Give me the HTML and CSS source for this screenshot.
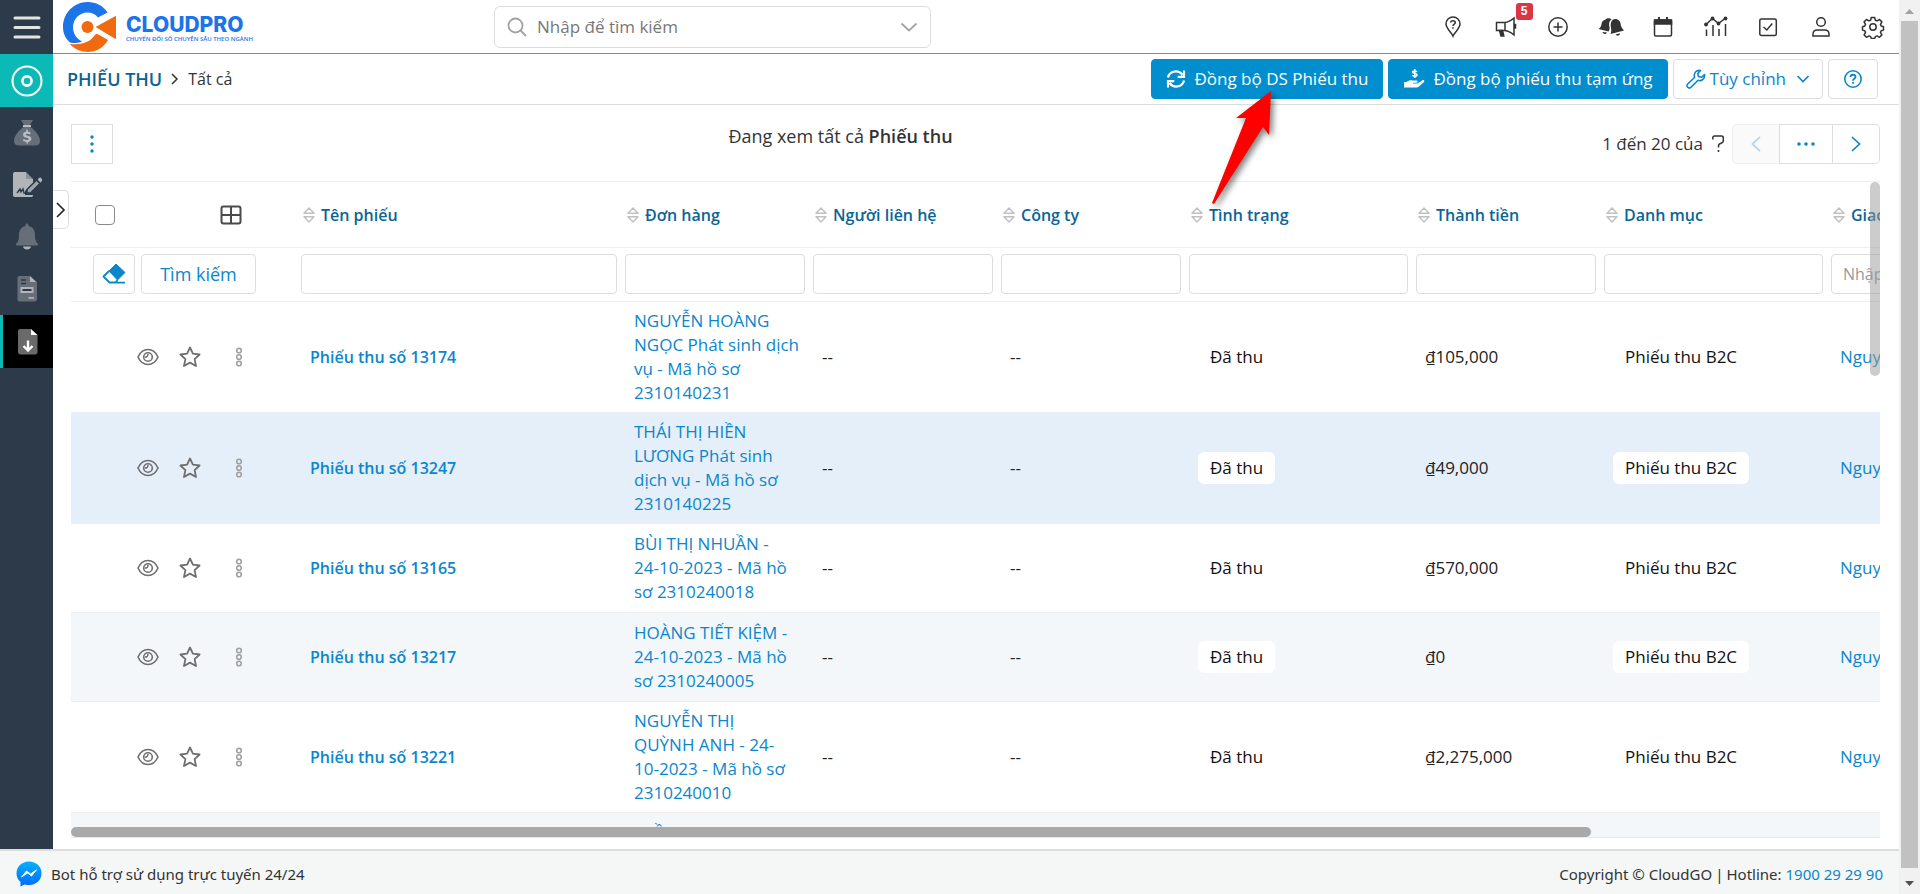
FILE: index.html
```html
<!DOCTYPE html>
<html lang="vi">
<head>
<meta charset="utf-8">
<title>Phiếu thu - CloudPro</title>
<link rel="stylesheet" href="styles.css">
</head>
<body>
<svg class="defs" aria-hidden="true">
  <symbol id="sort" viewBox="0 0 12 16"><path d="M6 1 11 6.200H1ZM6 15 11 9.800H1Z" fill="none" stroke="#c0c0c0" stroke-width="1.400" stroke-linejoin="round"/></symbol>
  <symbol id="eye" viewBox="0 0 22 18"><g fill="none" stroke="#6f6f6f" stroke-width="1.600"><path d="M1 9C3 4.500 6.500 1.500 11 1.500S19 4.500 21 9c-2 4.500-5.500 7.500-10 7.500S3 13.500 1 9Z"/><circle cx="11" cy="9" r="4.300"/></g><path d="M8 9a3 3 0 0 0 3-3v1.500L9.800 9.300Z" fill="#6f6f6f" stroke="#6f6f6f"/></symbol>
  <symbol id="star" viewBox="0 0 22 22"><path d="m11 1.500 2.900 6.200 6.700.8-5 4.600 1.400 6.900L11 16.600 5 20l1.400-6.900-5-4.600 6.700-.8Z" fill="none" stroke="#6f6f6f" stroke-width="1.800" stroke-linejoin="round"/></symbol>
  <symbol id="dots" viewBox="0 0 8 20"><g fill="none" stroke="#a0a0a0" stroke-width="1.600"><circle cx="4" cy="3.500" r="2.300"/><circle cx="4" cy="10" r="2.300"/><circle cx="4" cy="16.500" r="2.300"/></g></symbol>
</svg>
<div class="window">
  <div class="app">
    <div class="workspace">
      <nav class="sidebar" aria-label="Menu chính">
        <button class="side-item side-burger" aria-label="Mở menu"><svg width="30" height="26" viewBox="0 0 30 26"><path d="M3 4h24M3 13.500h24M3 23h24" stroke="#e3e5e4" stroke-width="3" stroke-linecap="round"/></svg></button>
        <a href="#" class="side-item side-home" aria-label="Trang chủ"><svg width="32" height="32" viewBox="0 0 32 32" fill="none" stroke="#fff"><circle cx="16" cy="16" r="14.500" stroke-width="2"/><circle cx="16" cy="16" r="4.600" stroke-width="2.600"/></svg></a>
        <a href="#" class="side-item" aria-label="Tài chính"><svg width="28" height="28" viewBox="0 0 28 28"><path d="M8 1h12l-3 5H11ZM10.500 8h7C22 11 27 17 27 22c0 3-2 4.500-5 4.500H6c-3 0-5-1.500-5-4.500C1 17 6 11 10.500 8Z" fill="#666f79"/><path d="M10 6h8v2h-8zM13.200 10.500h1.600v2c1.300.2 2.300.6 3 1.100l-.8 1.800c-1.800-1-4.300-1-4.300.2 0 1.700 5.700.7 5.700 4.200 0 1.700-1.300 2.800-3.300 3.100v1.600h-1.600v-1.600c-1.500-.1-2.800-.6-3.700-1.300l.9-1.700c1.900 1.300 5 1.400 5 0 0-1.700-5.600-.7-5.600-4.200 0-1.600 1.200-2.700 3.100-3.100Z" fill="#b8bdc3"/></svg></a>
        <a href="#" class="side-item" aria-label="Hợp đồng"><svg width="32" height="28" viewBox="0 0 32 28"><path d="M4 1h11v7h7v4l-8 8v4h8v.5c0 1-1 1.500-2 1.500H4c-1.500 0-2-1-2-2V3c0-1 .5-2 2-2Z" fill="#b1b5ba"/><path d="m15 1 7 7h-7Z" fill="#8b929a"/><path d="m6 22 3-4 1 3 2-3 1 4h3" fill="none" stroke="#2c3a49" stroke-width="1.400"/><path d="m16 18.500 9.500-9.500 3.500 3.500-9.500 9.500H16Z" fill="#9ea4aa" stroke="#2c3a49" stroke-width="1.500"/><path d="m26.500 8.500 2-1.800c1-.7 3.500 1.800 2.500 3l-1.500 2Z" fill="#b1b5ba"/></svg></a>
        <a href="#" class="side-item" aria-label="Thông báo"><svg width="24" height="28" viewBox="0 0 24 28"><path d="M10.500 3V2c0-2 3-2 3 0v1c5 1 6.500 5 6.500 9 0 5 1 7 3 9 .5.700 0 1.500-1 1.500H2c-1 0-1.500-.8-1-1.500 2-2 3-4 3-9 0-4 1.500-8 6.500-9Z" fill="#666f79"/><path d="M8 23.500h8c-.5 4-7.500 4-8 0Z" fill="#b1b5ba"/></svg></a>
        <a href="#" class="side-item" aria-label="Hóa đơn"><svg width="22" height="28" viewBox="0 0 22 28"><path d="M3 1h11v6h7v17c0 1.500-1 2.500-2.500 2.500h-15C2 26.500 1.500 25 1.500 24V3c0-1 .5-2 1.500-2Z" fill="#666f79"/><path d="M14 1v6h6.500ZM12.500 22H18v1.800h-5.500z" fill="#b1b5ba"/><path d="M5 5h5M5 8.500h5" stroke="#2c3a49" stroke-width="1.500"/><path d="M5.500 13h11v4h-11z" fill="#2c3a49" stroke="#b1b5ba" stroke-width="2"/></svg></a>
        <a href="#" class="side-item side-current" aria-label="Phiếu thu" aria-current="page"><svg width="22" height="28" viewBox="0 0 22 28"><path d="M3 1h11v6h6.500v17c0 1.500-1 2.500-2.500 2.500H3.500C2 26.500 1 25.500 1 24V3c0-1 1-2 2-2Z" fill="#6a6a6a"/><path d="M14 1v6h6.500Z" fill="#fff"/><path d="M11 12.500V22M6.500 18l4.500 4.500 4.500-4.500" fill="none" stroke="#fff" stroke-width="2.400"/></svg></a>
      </nav>
      <div class="main">
        <header class="topbar">
          <a href="#" class="logo" aria-label="CloudPro">
            <svg width="54" height="52" viewBox="0 0 54 52"><path d="M44.500 11.500C40 4.500 33 1 24.500 1C11 1 0 12 0 26c0 7 3 12 7 15.500c5 1 9 .5 12-1C13 37.500 10 32 10 26.500C10 18 16.500 11.500 24.500 11.500c4 0 8 1.500 10.500 5Z" fill="#1b74e8"/><path d="M6.500 43c12 1 20-1.500 25-8.500c1-1.500 2-2 4-1l9.500 5.500C40.500 47 33 51 25 51c-7 0-13.500-3-18.500-8Z" fill="#f26a0f"/><circle cx="24.500" cy="26" r="6" fill="#f26a0f"/><path d="M33.500 26 52.500 15.500v22Z" fill="#f26a0f" stroke="#f26a0f" stroke-linejoin="round"/></svg>
            <span class="logo-text"><span class="logo-name">CLOUDPRO</span><span class="logo-tag">CHUYỂN ĐỔI SỐ CHUYÊN SÂU THEO NGÀNH</span></span>
          </a>
          <div class="search">
            <svg width="20" height="20" viewBox="0 0 20 20" fill="none" stroke="#a3a3a3" stroke-width="1.800"><circle cx="8.500" cy="8.500" r="7"/><path d="m13.500 13.500 5.500 5.500"/></svg>
            <input type="text" aria-label="Tìm kiếm" placeholder="Nhập để tìm kiếm">
            <svg width="18" height="18" viewBox="0 0 18 18" fill="none" stroke="#a3a3a3" stroke-width="1.800"><path d="m1.500 5.500 7.500 7 7.500-7"/></svg>
          </div>
          <div class="top-icons">
            <button aria-label="Hướng dẫn"><svg width="24" height="24" viewBox="0 0 24 24" fill="none" stroke="#333" stroke-width="1.500"><path d="M12 21c-1-3-7-7.500-7-12a7 7 0 0 1 14 0c0 4.500-6 9-7 12Z"/><path d="M9.700 7.500C9.700 5 14.300 5 14.300 7.500c0 1.700-2.300 1.600-2.300 3.500M12 12.300v1.500"/></svg></button>
            <button aria-label="Tin mới, 5"><svg width="24" height="24" viewBox="0 0 24 24" fill="none" stroke="#333" stroke-width="1.500"><path d="M2.500 7.500H11c3-.3 6-2 9-4.500v17c-3-2.500-6-4.200-9-4.500H2.500ZM11 7.500v8M20 9.500h1.500v3.500H20"/><path d="M5.500 15.500h3l1.300 5.500H7Z" fill="#333"/></svg><span class="badge">5</span></button>
            <button aria-label="Thêm"><svg width="24" height="24" viewBox="0 0 24 24" fill="none" stroke="#333" stroke-width="1.500"><circle cx="12" cy="12" r="9.200"/><path d="M12 7.500v9M7.500 12h9"/></svg></button>
            <button aria-label="Thông báo"><svg width="26" height="24" viewBox="0 0 26 24" fill="#333"><path d="M7.500 4.500c1.500-1.800 4.500-1.500 6-.3-3 2.500-2.500 5.500-2 8 .3 1.500 0 2.800-1 4.300L.5 14c2-1.500 2.800-2.800 3-5 .2-2 1.500-4 4-4.500Z"/><path d="M14.500 5c2.500-2.500 7.500-.5 8 3 .3 3 .8 4.500 3.500 7.500l-13.500 3.500c1.300-3 .7-4.500.3-7-.4-3 .2-5.500 1.700-7ZM4.500 17l4.500.5c-1.500 2.500-4 1.500-4.500-.5ZM17.500 19.500l4.500-1.200c0 2.400-3 3.200-4.500 1.200Z"/></svg></button>
            <button aria-label="Lịch"><svg width="24" height="24" viewBox="0 0 24 24" fill="none" stroke="#333" stroke-width="1.500"><rect x="3.500" y="5" width="17" height="16" rx="1.500"/><path d="M3.500 5h17v4h-17z" fill="#333"/><path d="M8 2v4M16 2v4" stroke-width="2"/></svg></button>
            <button aria-label="Báo cáo"><svg width="26" height="24" viewBox="0 0 26 24" fill="none" stroke="#333" stroke-width="1.500"><path d="M3 9.500 9.500 3.500l6 5L22.500 3M3.500 14.500V21M10 10v11M16 14v7M22.500 9v12"/><g fill="#333" stroke="none"><circle cx="3" cy="9.500" r="1.900"/><circle cx="9.500" cy="3.500" r="1.900"/><circle cx="15.500" cy="8.500" r="1.900"/><circle cx="22.500" cy="3.500" r="1.900"/></g></svg></button>
            <button aria-label="Công việc"><svg width="24" height="24" viewBox="0 0 24 24" fill="none" stroke="#333" stroke-width="1.500"><rect x="3.800" y="4" width="16.500" height="16.500" rx="1.500"/><path d="m7.500 12 3.300 3 5.500-6.500"/></svg></button>
            <button aria-label="Tài khoản"><svg width="24" height="24" viewBox="0 0 24 24" fill="none" stroke="#333" stroke-width="1.500"><circle cx="12" cy="7" r="4.300"/><path d="M4 21v-2c0-2.500 2-4 4.500-4h7c2.500 0 4.500 1.500 4.500 4v2Z"/></svg></button>
            <button aria-label="Cài đặt"><svg width="24" height="24" viewBox="0 0 24 24" fill="none" stroke="#333" stroke-width="1.500" stroke-linejoin="round"><circle cx="12" cy="12" r="3.200"/><path d="M10.300 2.500h3.400l.7 2.700 1.600.7 2.500-1.400 2.400 2.400-1.400 2.500.7 1.600 2.300.7v3.400l-2.300.7-.7 1.600 1.400 2.500-2.400 2.400-2.500-1.400-1.600.7-.7 1.900h-3.400l-.7-1.900-1.600-.7-2.500 1.400-2.400-2.400 1.400-2.500-.7-1.600-2.300-.7v-3.400l2.300-.7.7-1.600-1.400-2.500 2.400-2.400L8 5.900l1.600-.7Z"/></svg></button>
          </div>
        </header>
        <div class="module-bar">
          <div class="crumbs"><a href="#">PHIẾU THU</a><svg width="10" height="14" viewBox="0 0 10 14" fill="none" stroke="#333" stroke-width="1.500"><path d="m2 2 5 5-5 5"/></svg><span>Tất cả</span></div>
          <div class="actions">
            <button class="btn btn-primary"><svg width="20" height="20" viewBox="0 0 20 20" fill="none" stroke="#fff" stroke-width="2.200"><path d="M2 8.500C3.500 1.500 12.500.5 16.500 6M18 1.500v6.300h-6.300M18 11.500C16.500 18.500 7.500 19.500 3.500 14M2 18.500v-6.300h6.300"/></svg>Đồng bộ DS Phiếu thu</button>
            <button class="btn btn-primary"><svg width="22" height="20" viewBox="0 0 22 20"><path d="M1 13h2.500c2.500-2 4-2 6-1.500h4c1.500 0 1.500 2 0 2.200H10v.8h4.500l5-3.300c1.500-.8 2.500.8 1.500 1.800l-5 4.500c-.7.700-1.500 1-2.500 1H1Z" fill="#fff"/><path d="M14 2.800c-1.500-1.300-4.500-1.200-4.500.3 0 1.800 4.600.7 4.600 2.800 0 1.700-3.200 1.700-4.800.3M11.800 0v9" fill="none" stroke="#fff" stroke-width="1.500"/></svg>Đồng bộ phiếu thu tạm ứng</button>
            <button class="btn btn-custom"><svg width="20" height="20" viewBox="0 0 20 20" fill="none" stroke="#0b86cb" stroke-width="1.600" stroke-linejoin="round"><path d="M14.500 1.500a5 5 0 0 0-5.800 6.700L1.700 15a2.300 2.300 0 0 0 3.300 3.300l7-7a5 5 0 0 0 6.500-5.800l-3 2.800-3-.8-.7-3Z"/></svg>Tùy chỉnh<svg class="caret" width="14" height="12" viewBox="0 0 14 12" fill="none" stroke="#0b86cb" stroke-width="1.700"><path d="m1.500 3 5.500 5.500L12.500 3"/></svg></button>
            <button class="btn btn-help" aria-label="Trợ giúp"><svg width="20" height="20" viewBox="0 0 20 20" fill="none" stroke="#0b86cb" stroke-width="1.600"><circle cx="10" cy="10" r="8.200"/><path d="M7.500 8c0-3 5-3 5 0 0 1.800-2.500 1.700-2.500 3.700M10 13v1.700" stroke-width="1.800"/></svg></button>
          </div>
        </div>
        <main class="content">
          <button class="panel-toggle" aria-label="Mở bảng bên"><svg width="12" height="18" viewBox="0 0 12 18" fill="none" stroke="#222" stroke-width="1.600"><path d="m2 2 7 7-7 7"/></svg></button>
          <div class="toolbar">
            <button class="more" aria-label="Thêm thao tác"><svg width="6" height="20" viewBox="0 0 6 20" fill="#0b86cb"><circle cx="3" cy="3" r="1.700"/><circle cx="3" cy="10" r="1.700"/><circle cx="3" cy="17" r="1.700"/></svg></button>
            <p class="viewing">Đang xem tất cả <strong>Phiếu thu</strong></p>
            <div class="paging"><span>1 đến 20 của</span><svg class="unknown" width="14" height="20" viewBox="0 0 14 20" fill="none" stroke="#333" stroke-width="1.500"><path d="M1.800 5.500V3.500Q2 2 3.500 2h7Q12.300 2 12.300 4v3Q12.300 8.500 10.500 9L8.500 10Q7.500 10.500 7.500 12v1.500M7.500 16v2"/></svg>
              <div class="pager">
                <button disabled aria-label="Trang trước"><svg width="12" height="18" viewBox="0 0 12 18" fill="none" stroke="#a3d5f1" stroke-width="1.700"><path d="m10 2-7.500 7 7.500 7"/></svg></button>
                <button class="pager-mid" aria-label="Chọn trang"><svg width="20" height="6" viewBox="0 0 20 6" fill="#0b86cb"><circle cx="3" cy="3" r="1.800"/><circle cx="10" cy="3" r="1.800"/><circle cx="17" cy="3" r="1.800"/></svg></button>
                <button aria-label="Trang sau"><svg width="12" height="18" viewBox="0 0 12 18" fill="none" stroke="#0b86cb" stroke-width="1.700"><path d="m2 2 7.500 7L2 16"/></svg></button>
              </div>
            </div>
          </div>
          <div class="list">
            <table>
              <colgroup><col class="c-tools"><col class="c-name"><col class="c-mid"><col class="c-mid"><col class="c-mid"><col class="c-wide"><col class="c-mid"><col class="c-wide"><col class="c-last"></colgroup>
              <thead>
                <tr class="titles">
                  <th><div class="head-tools"><input type="checkbox" aria-label="Chọn tất cả"><button class="icon-btn" aria-label="Chọn cột"><svg width="22" height="20" viewBox="0 0 22 20" fill="none" stroke="#4a4a4a" stroke-width="2"><rect x="1.500" y="1.500" width="19" height="17" rx="2"/><path d="M11 1.500v17M1.500 10h19"/></svg></button></div></th>
                  <th><a href="#"><svg width="12" height="16"><use href="#sort"/></svg>Tên phiếu</a></th>
                  <th><a href="#"><svg width="12" height="16"><use href="#sort"/></svg>Đơn hàng</a></th>
                  <th><a href="#"><svg width="12" height="16"><use href="#sort"/></svg>Người liên hệ</a></th>
                  <th><a href="#"><svg width="12" height="16"><use href="#sort"/></svg>Công ty</a></th>
                  <th><a href="#"><svg width="12" height="16"><use href="#sort"/></svg>Tình trạng</a></th>
                  <th><a href="#"><svg width="12" height="16"><use href="#sort"/></svg>Thành tiền</a></th>
                  <th><a href="#"><svg width="12" height="16"><use href="#sort"/></svg>Danh mục</a></th>
                  <th><a href="#"><svg width="12" height="16"><use href="#sort"/></svg>Giao cho</a></th>
                </tr>
                <tr class="filters">
                  <td><div class="filter-tools"><button class="btn btn-clear" aria-label="Xóa bộ lọc"><svg width="24" height="22" viewBox="0 0 24 22"><path d="M14 1 23 9.500 15.500 17 7 8Z" fill="#0b86cb" stroke="#0b86cb" stroke-linejoin="round"/><path d="m7 8-5.500 5.500L7.500 19.500h6L15.500 17M7.500 19.700H23" fill="none" stroke="#0b86cb" stroke-width="1.800" stroke-linejoin="round"/></svg></button><button class="btn btn-search">Tìm kiếm</button></div></td>
                  <td><input type="text" aria-label="Lọc tên phiếu"></td>
                  <td><input type="text" aria-label="Lọc đơn hàng"></td>
                  <td><input type="text" aria-label="Lọc người liên hệ"></td>
                  <td><input type="text" aria-label="Lọc công ty"></td>
                  <td><input type="text" aria-label="Lọc tình trạng"></td>
                  <td><input type="text" aria-label="Lọc thành tiền"></td>
                  <td><input type="text" aria-label="Lọc danh mục"></td>
                  <td><input type="text" aria-label="Lọc giao cho" placeholder="Nhập để chọn"></td>
                </tr>
              </thead>
              <tbody id="rows"></tbody>
            </table>
            <div class="bar-x"></div>
            <div class="bar-y"></div>
          </div>
        </main>
      </div>
    </div>
    <footer class="footer">
      <a href="#" class="bot"><svg width="26" height="26" viewBox="0 0 26 26"><defs><linearGradient id="msg" x1="0" y1="0" x2="0" y2="1"><stop offset="0" stop-color="#00b2ff"/><stop offset="1" stop-color="#006aff"/></linearGradient></defs><path d="M13 .5C6 .5.500 5.500.500 12.300c0 3.700 1.500 6.700 4 8.700v4.500l4-2c1.500.4 3 .6 4.500.6 7 0 12.500-5 12.500-11.800S20 .5 13 .5Z" fill="url(#msg)"/><path d="m5.500 16 5-6 4 3 6-4.200-5 6.200-4-3Z" fill="#fff" stroke="#fff"/></svg>Bot hỗ trợ sử dụng trực tuyến 24/24</a>
      <p>Copyright © CloudGO<span class="bar">|</span>Hotline: <a href="#">1900 29 29 90</a></p>
    </footer>
  </div>
  <div class="page-scroll" aria-hidden="true">
    <svg width="21" height="21" viewBox="0 0 21 21"><path d="M6 14h9l-4.500-5Z" fill="#a3a3a3"/></svg>
    <div class="page-thumb"></div>
    <svg width="21" height="26" viewBox="0 0 21 26"><path d="M6 13h9l-4.500 5Z" fill="#505050"/></svg>
  </div>
</div>
<svg class="pointer" width="80" height="130" viewBox="0 0 80 130" aria-hidden="true"><path d="M64 3 29 30h10L5 115l2 1L56 39l6 8Z" fill="#fe0000"/></svg>
<script src="rows.js"></script>
</body>
</html>
```

FILE: rows.js
```js
const receipts = [
  ["13174", "NGUYỄN HOÀNG\nNGỌC Phát sinh dịch\nvụ - Mã hồ sơ\n2310140231", "105,000"],
  ["13247", "THÁI THỊ HIỀN\nLƯƠNG Phát sinh\ndịch vụ - Mã hồ sơ\n2310140225", "49,000"],
  ["13165", "BÙI THỊ NHUẦN -\n24-10-2023 - Mã hồ\nsơ 2310240018", "570,000"],
  ["13217", "HOÀNG TIẾT KIỆM -\n24-10-2023 - Mã hồ\nsơ 2310240005", "0"],
  ["13221", "NGUYỄN THỊ\nQUỲNH ANH - 24-\n10-2023 - Mã hồ sơ\n2310240010", "2,275,000"],
  ["13222", "TRẦN NAM SƠN\n- 24-10-2023 - Mã hồ\nsơ 2310240011", "350,000"]
];
document.getElementById("rows").innerHTML = receipts.map(([id, order, amount], i) => `
  <tr${i === 1 ? ' class="hovered"' : ""}>
    <td><div class="row-tools">
      <button class="icon-btn" aria-label="Xem nhanh"><svg width="22" height="18"><use href="#eye"/></svg></button>
      <button class="icon-btn" aria-label="Đánh dấu"><svg width="22" height="22"><use href="#star"/></svg></button>
      <button class="icon-btn" aria-label="Thao tác"><svg width="8" height="20"><use href="#dots"/></svg></button>
    </div></td>
    <td><a class="name" href="#">Phiếu thu số ${id}</a></td>
    <td><a class="order" href="#">${order}</a></td>
    <td>--</td>
    <td>--</td>
    <td><span class="chip">Đã thu</span></td>
    <td>₫${amount}</td>
    <td><span class="chip">Phiếu thu B2C</span></td>
    <td><a href="#">Nguyễn</a></td>
  </tr>`).join("");
```

FILE: styles.css
```css
* { box-sizing: border-box; }
body { margin: 0; font: 17px/24px "Open Sans", "Noto Sans", sans-serif; color: #333; background: #fff; }
a { color: #0b86cb; text-decoration: none; }
button, input { font: inherit; color: inherit; }
button { background: none; border: 0; padding: 0; }
svg { display: block; flex: none; }
p { margin: 0; }
.defs { position: absolute; width: 0; height: 0; }

.window { display: flex; height: 100vh; overflow: hidden; }
.app { flex: 1; min-width: 0; display: flex; flex-direction: column; }
.workspace { flex: 1; min-height: 0; display: flex; }

.sidebar { width: 53px; background: #2c3a49; display: flex; flex-direction: column; flex: none; }
.side-item { height: 52px; display: flex; align-items: center; justify-content: center; flex: none; }
.side-burger { height: 54px; }
.side-home { background: #0bb9b7; height: 53px; }
.side-current { background: #000; border-left: 3px solid #0bb9b7; height: 53px; }

.main { flex: 1; min-width: 0; display: flex; flex-direction: column; }
.topbar { height: 54px; flex: none; border-bottom: 1px solid #3cb371; display: flex; align-items: center; padding: 0 6px 0 10px; }
.logo { display: flex; align-items: center; gap: 9px; width: 431px; height: 53px; }
.logo-text { display: flex; flex-direction: column; padding-top: 4px; color: #1b74e8; }
.logo-name { font: 800 21px/20px Inter, sans-serif; }
.logo-tag { font: 600 6px/8px "Open Sans", sans-serif; }
.search { width: 437px; height: 42px; border: 1px solid #ddd; border-radius: 6px; display: flex; align-items: center; padding: 0 12px; gap: 10px; }
.search input { flex: 1; min-width: 0; border: 0; outline: 0; padding: 0; background: none; }
.search input::placeholder { color: #777; opacity: 1; }
.top-icons { margin-left: auto; display: flex; justify-content: space-between; width: 460px; }
.top-icons button { width: 40px; height: 40px; display: flex; align-items: center; justify-content: center; position: relative; }
.badge { position: absolute; left: 30px; top: -4px; width: 17px; height: 17px; border-radius: 3px; background: #dc3545; color: #fff; font: 700 12px/17px "Liberation Sans", sans-serif; text-align: center; }

.module-bar { height: 51px; flex: none; border-bottom: 1px solid #ddd; display: flex; align-items: center; justify-content: space-between; padding: 0 21px 0 14px; }
.crumbs { display: flex; align-items: center; gap: 8px; font-size: 16px; }
.crumbs a { font-size: 18px; font-weight: 600; color: #0a6496; }
.actions { display: flex; gap: 5px; }
.btn { height: 40px; border: 1px solid #ddd; border-radius: 4px; display: flex; align-items: center; justify-content: center; gap: 8px; color: #0b86cb; background: #fff; }
.btn-primary { background: #008ecf; border-color: #008ecf; color: #fff; padding: 0 14px; }
.btn-custom { padding: 0 12px; gap: 4px; }
.btn-custom .caret { margin-left: 6px; }
.btn-help { width: 50px; }

.content { flex: 1; min-height: 0; display: flex; flex-direction: column; padding: 19px 19px 11px 18px; position: relative; }
.panel-toggle { position: absolute; left: 0; top: 85px; width: 16px; height: 39px; border: 1px solid #ddd; border-left: 0; border-radius: 0 5px 5px 0; display: flex; align-items: center; justify-content: center; }
.toolbar { display: grid; grid-template-columns: 1fr auto 1fr; height: 57px; flex: none; }
.more { width: 42px; height: 40px; border: 1px solid #ddd; display: flex; align-items: center; justify-content: center; }
.viewing { font-size: 18px; margin-right: 270px; }
.viewing strong { font-weight: 600; }
.paging { justify-self: end; display: flex; height: 40px; align-items: center; }
.unknown { margin: 0 7px 0 8px; }
.pager { display: flex; }
.pager button { width: 47px; height: 40px; border: 1px solid #ddd; display: flex; align-items: center; justify-content: center; }
.pager button:first-child { border-radius: 5px 0 0 5px; background: #fafafa; border-right: 0; border-color: #eee; }
.pager .pager-mid { width: 54px; }
.pager button:last-child { border-radius: 0 5px 5px 0; border-left: 0; }

.list { flex: 1; min-height: 0; overflow: hidden; position: relative; border-top: 1px solid #eee; border-bottom: 1px solid #e6eaed; }
table { border-collapse: collapse; table-layout: fixed; width: 1955px; }
.c-tools { width: 226px; }
.c-name { width: 324px; }
.c-mid { width: 188px; }
.c-wide { width: 227px; }
.c-last { width: 200px; }
th, td { border-bottom: 1px solid #eee; text-align: left; }
.titles th { height: 65px; padding: 2px 6px 0; font-weight: 600; font-size: 16px; }
.titles a { display: flex; align-items: center; gap: 6px; color: #0a6496; }
.head-tools { display: flex; align-items: center; padding-left: 18px; gap: 105px; }
.head-tools input { appearance: none; width: 20px; height: 20px; margin: 0; border: 1px solid #8a8a8a; border-radius: 4px; background: #fff; }
.filters td { height: 54px; padding: 0 4px; }
.filters input { display: block; width: 100%; height: 40px; border: 1px solid #ddd; border-radius: 4px; padding: 0 11px; font-size: 16px; }
.filters input::placeholder { color: #999; opacity: 1; }
.filter-tools { display: flex; gap: 6px; padding-left: 18px; }
.btn-clear { width: 42px; }
.btn-search { width: 115px; font-size: 18px; }
tbody td { height: 89px; padding: 7px 6px 7px 13px; color: #222; }
tbody tr:nth-child(even) { background: #f3f7fa; }
tbody tr.hovered { background: #e4eff9; }
tbody td:first-child { padding: 0; }
.row-tools { display: flex; align-items: center; padding-left: 66px; gap: 20px; }
.row-tools button:last-child { margin-left: 14px; }
.name { font-weight: 600; font-size: 16px; }
.order { white-space: pre; }
.chip { display: inline-block; padding: 4px 12px; border-radius: 6px; background: #fff; color: #111; }
.bar-x { position: absolute; left: 0; bottom: 0; width: 84%; height: 10px; border-radius: 5px; background: #a9a9a9; }
.bar-y { position: absolute; right: 0; top: 0; width: 10px; height: 194px; border-radius: 5px; background: rgba(153, 153, 153, .5); }

.footer { height: 45px; flex: none; background: #f5f7f7; border-top: 2px solid #ddd; display: flex; align-items: center; justify-content: space-between; padding: 3px 16px 0; font: 15px/24px "Noto Sans", sans-serif; }
.bot { display: flex; align-items: center; gap: 9px; color: #333; }
.bar { padding: 0 3px; }

.page-scroll { width: 21px; flex: none; background: #f1f1f1; display: flex; flex-direction: column; }
.page-thumb { flex: 1; margin: 0 2px; background: #c1c1c1; }
.pointer { position: absolute; left: 1207px; top: 88px; filter: drop-shadow(3px 3px 3px rgba(0, 0, 0, .5)); }
```
